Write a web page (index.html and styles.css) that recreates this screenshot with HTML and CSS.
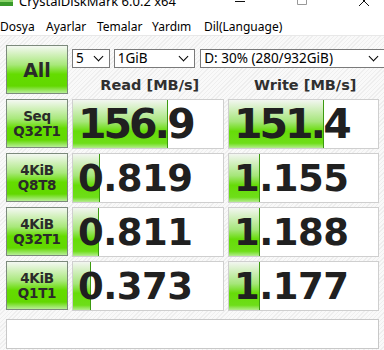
FILE: index.html
```html
<!DOCTYPE html>
<html>
  <head>
    <title>CrystalDiskMark 6.0.2 x64</title>
    <meta name="viewport" content="width=device-width, initial-scale=1" />
    <link rel="stylesheet" href="styles.css">
  </head>
  <body>
    <div class="window">
      <div class="titlebar">
        <div class="title">
          <svg class="app-icon" width="14" height="12" viewBox="0 0 14 12">
            <rect x="0" y="0" width="13" height="6" fill="#3a9a2a"/>
            <rect x="0" y="0" width="13" height="2" fill="#8ad46a"/>
          </svg>
          <span>CrystalDiskMark 6.0.2 x64</span>
        </div>
        <div class="controls">
          <svg width="12" height="12" viewBox="0 0 12 12"><path d="M1 1.5h10" stroke="#111" stroke-width="1"/></svg>
          <svg width="12" height="12" viewBox="0 0 12 12"><path d="M1.5 -4.5h9v9h-9z" fill="none" stroke="#999" stroke-width="1"/></svg>
          <svg width="12" height="12" viewBox="0 0 12 12"><path d="M1 -4l10 10M11 -4l-10 10" stroke="#111" stroke-width="1"/></svg>
        </div>
      </div>
      <div class="menubar">
        <span class="m1">Dosya</span>
        <span class="m2">Ayarlar</span>
        <span class="m3">Temalar</span>
        <span class="m4">Yardım</span>
        <span>Dil(Language)</span>
      </div>
      <div class="main">
        <div class="board">
          <div class="btn all">All</div>
          <div class="top">
            <div class="selects">
              <div class="select s-count">5<i class="chev"></i></div>
              <div class="select s-size">1GiB<i class="chev"></i></div>
              <div class="select s-drive">D: 30% (280/932GiB)<i class="chev"></i></div>
            </div>
            <div class="heads">
              <div class="head">Read [MB/s]</div>
              <div class="head">Write [MB/s]</div>
            </div>
          </div>

          <div class="btn label">Seq<br>Q32T1</div>
          <div class="cell"><div class="bar" style="width: 63%"></div><span class="num big">156.9</span></div>
          <div class="cell"><div class="bar" style="width: 64%"></div><span class="num big">151.4</span></div>

          <div class="btn label">4KiB<br>Q8T8</div>
          <div class="cell"><div class="bar" style="width: 18%"></div><span class="num">0.819</span></div>
          <div class="cell"><div class="bar" style="width: 21%"></div><span class="num">1.155</span></div>

          <div class="btn label">4KiB<br>Q32T1</div>
          <div class="cell"><div class="bar" style="width: 17%"></div><span class="num">0.811</span></div>
          <div class="cell"><div class="bar" style="width: 21%"></div><span class="num">1.188</span></div>

          <div class="btn label">4KiB<br>Q1T1</div>
          <div class="cell"><div class="bar" style="width: 12%"></div><span class="num">0.373</span></div>
          <div class="cell"><div class="bar" style="width: 21%"></div><span class="num">1.177</span></div>
        </div>
        <div class="comment"></div>
      </div>
    </div>
  </body>
</html>
```

FILE: styles.css
```css
*{
  box-sizing:border-box;
}
body{
  margin:0;
  padding:0;
  font-family: "Noto Sans", "Open Sans", sans-serif;
  background:#fff;
  width:384px;
  height:350px;
  overflow:hidden;
}
.window{
  width:384px;
  height:350px;
  display:flex;
  flex-direction:column;
}
.titlebar{
  height:17px;
  display:flex;
  justify-content:space-between;
  overflow:hidden;
  background:#fff;
}
.title{
  display:flex;
  align-items:center;
  gap:5px;
  margin-top:-9px;
  height:20px;
  font-size:13px;
  color:#000;
}
.app-icon{
  margin-top:9px;
}
.controls{
  display:flex;
  gap:50px;
  padding-right:14px;
  align-items:flex-start;
}
.menubar{
  height:19px;
  display:flex;
  align-items:center;
  font-size:12px;
  background:#fff;
  border-bottom:1px solid #e8e8e8;
}
.m1{ width:46px; }
.m2{ width:51px; }
.m3{ width:55px; }
.m4{ width:52px; }
.main{
  flex:1;
  background:repeating-linear-gradient(-45deg, #f9f9f9 0 2px, #eeeeee 2px 3px);
  padding:9px 5px 0 6px;
}
.board{
  display:grid;
  grid-template-columns:62px 152px 151px;
  grid-template-rows:50px 50px 50px 50px 50px;
  gap:4px;
}
.btn{
  border:1px solid #7c8a7c;
  background:linear-gradient(#f4f8f2 0%, #a8e87a 40%, #64dc00 60%, #62d800 85%, #b8ee98 100%);
  display:flex;
  align-items:center;
  justify-content:center;
  text-align:center;
  font-family: "DejaVu Sans", Verdana, sans-serif;
  font-weight:bold;
  color:#2a2a2a;
}
.all{
  font-size:19px;
  height:49px;
}
.label{
  font-size:13.5px;
  line-height:15px;
  height:49px;
  letter-spacing:-0.3px;
}
.top{
  grid-column:2 / 4;
  display:flex;
  flex-direction:column;
}
.selects{
  display:flex;
  gap:4px;
  margin-top:4px;
  margin-right:-6px;
}
.select{
  height:19px;
  border:1px solid #7a7a7a;
  background:#fff;
  font-size:13.5px;
  line-height:17px;
  padding-left:3px;
  display:flex;
  justify-content:space-between;
  align-items:center;
  color:#000;
}
.s-count{ width:38px; }
.s-size{ width:82px; }
.s-drive{ width:186px; margin-left:1px; }
.chev{
  width:7px;
  height:7px;
  border-right:1.6px solid #000;
  border-bottom:1.6px solid #000;
  transform:rotate(45deg);
  margin-right:7px;
  margin-top:-4px;
}
.heads{
  display:flex;
  gap:4px;
  margin-top:9px;
}
.head{
  width:152px;
  text-align:center;
  font-family: "DejaVu Sans", Verdana, sans-serif;
  font-weight:bold;
  font-size:14.5px;
  color:#303030;
  padding-left:4px;
}
.cell{
  height:50px;
  background:#fff;
  border:1px solid #cfcfcf;
  display:grid;
  align-items:center;
  overflow:hidden;
}
.bar,
.num{
  grid-area:1 / 1;
}
.bar{
  height:100%;
  background:linear-gradient(#f2f6f0 0%, #a6e67a 45%, #66dc08 65%, #6ede18 90%, #b4ec90 100%);
  border-right:1px solid #3c9a10;
}
.num{
  font-family: "DejaVu Sans", Verdana, sans-serif;
  font-weight:bold;
  font-size:37px;
  color:#202020;
  padding-left:5px;
  letter-spacing:-0.5px;
  white-space:nowrap;
}
.num.big{
  font-size:41px;
  letter-spacing:-3px;
}
.comment{
  margin-top:8px;
  height:30px;
  width:373px;
  background:#fff;
  border:1px solid #c8c8c8;
}
```
